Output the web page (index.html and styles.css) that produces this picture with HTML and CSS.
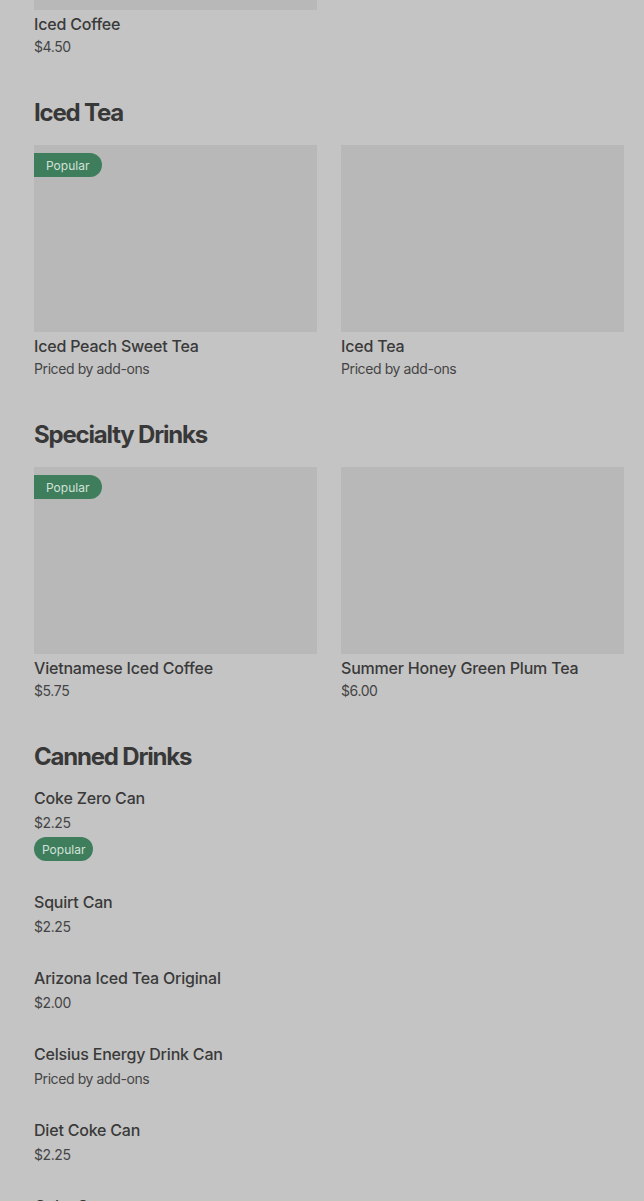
FILE: index.html
```html
<!DOCTYPE html>
<html lang="en">
<head>
<meta charset="utf-8">
<title>Menu</title>
<link rel="stylesheet" href="styles.css">
</head>
<body>
<main class="menu">
  <section class="section section-first">
    <div class="grid">
      <div class="card">
        <div class="thumb"></div>
        <div class="name">Iced Coffee</div>
        <div class="price">$4.50</div>
      </div>
    </div>
  </section>

  <section class="section">
    <h2 class="heading">Iced Tea</h2>
    <div class="grid">
      <div class="card">
        <div class="thumb"><span class="badge badge-tag">Popular</span></div>
        <div class="name">Iced Peach Sweet Tea</div>
        <div class="price">Priced by add-ons</div>
      </div>
      <div class="card">
        <div class="thumb"></div>
        <div class="name">Iced Tea</div>
        <div class="price">Priced by add-ons</div>
      </div>
    </div>
  </section>

  <section class="section">
    <h2 class="heading">Specialty Drinks</h2>
    <div class="grid">
      <div class="card">
        <div class="thumb"><span class="badge badge-tag">Popular</span></div>
        <div class="name">Vietnamese Iced Coffee</div>
        <div class="price">$5.75</div>
      </div>
      <div class="card">
        <div class="thumb"></div>
        <div class="name">Summer Honey Green Plum Tea</div>
        <div class="price">$6.00</div>
      </div>
    </div>
  </section>

  <section class="section">
    <h2 class="heading">Canned Drinks</h2>
    <div class="list">
      <div class="row">
        <div class="name">Coke Zero Can</div>
        <div class="price price-list">$2.25</div>
        <span class="badge badge-pill">Popular</span>
      </div>
      <div class="row">
        <div class="name">Squirt Can</div>
        <div class="price price-list">$2.25</div>
      </div>
      <div class="row">
        <div class="name">Arizona Iced Tea Original</div>
        <div class="price price-list">$2.00</div>
      </div>
      <div class="row">
        <div class="name">Celsius Energy Drink Can</div>
        <div class="price price-list">Priced by add-ons</div>
      </div>
      <div class="row">
        <div class="name">Diet Coke Can</div>
        <div class="price price-list">$2.25</div>
      </div>
      <div class="row">
        <div class="name">Coke Can</div>
        <div class="price price-list">$2.25</div>
      </div>
    </div>
  </section>
</main>
</body>
</html>
```

FILE: styles.css
```css
html, body {
  margin: 0;
  padding: 0;
  background: #c4c4c4;
}
body {
  font-family: Inter, Roboto, "Liberation Sans", Arial, sans-serif;
  color: #3a3a3a;
  overflow: hidden;
  height: 1201px;
}
.menu {
  padding: 0 20px 0 34px;
  margin-top: -177px;
  display: flex;
  flex-direction: column;
  gap: 40px;
}
.section {
  display: flex;
  flex-direction: column;
}
.heading {
  margin: 0 0 16px 0;
  font-family: Inter, "Liberation Sans", Arial, sans-serif;
  font-size: 24px;
  line-height: 32px;
  font-weight: 700;
  letter-spacing: -1.2px;
  color: #383838;
}
.grid {
  display: grid;
  grid-template-columns: 283px 283px;
  column-gap: 24px;
}
.card {
  display: flex;
  flex-direction: column;
}
.thumb {
  position: relative;
  height: 187px;
  background: #b8b8b8;
  margin-bottom: 4px;
}
.name {
  font-size: 16px;
  line-height: 20px;
  font-weight: 500;
  letter-spacing: -0.2px;
  color: #3a3a3a;
}
.price {
  margin-top: 3px;
  font-size: 14px;
  line-height: 20px;
  font-weight: 400;
  letter-spacing: -0.4px;
  color: #444;
}
.price-list {
  margin-top: 5px;
}
.badge {
  display: inline-flex;
  align-items: center;
  height: 24px;
  font-size: 12px;
  background: #3e7e5d;
  color: #d3e2d8;
  box-sizing: border-box;
}
.badge-tag {
  position: absolute;
  top: 8px;
  left: 0;
  padding: 0 13px 0 12px;
  border-radius: 0 12px 12px 0;
}
.list {
  display: flex;
  flex-direction: column;
  gap: 31px;
  margin-top: -1px;
}
.row {
  display: flex;
  flex-direction: column;
  align-items: flex-start;
}
.badge-pill {
  margin-top: 4px;
  height: 24px;
  padding: 0 8px;
  border-radius: 12px;
}
```
